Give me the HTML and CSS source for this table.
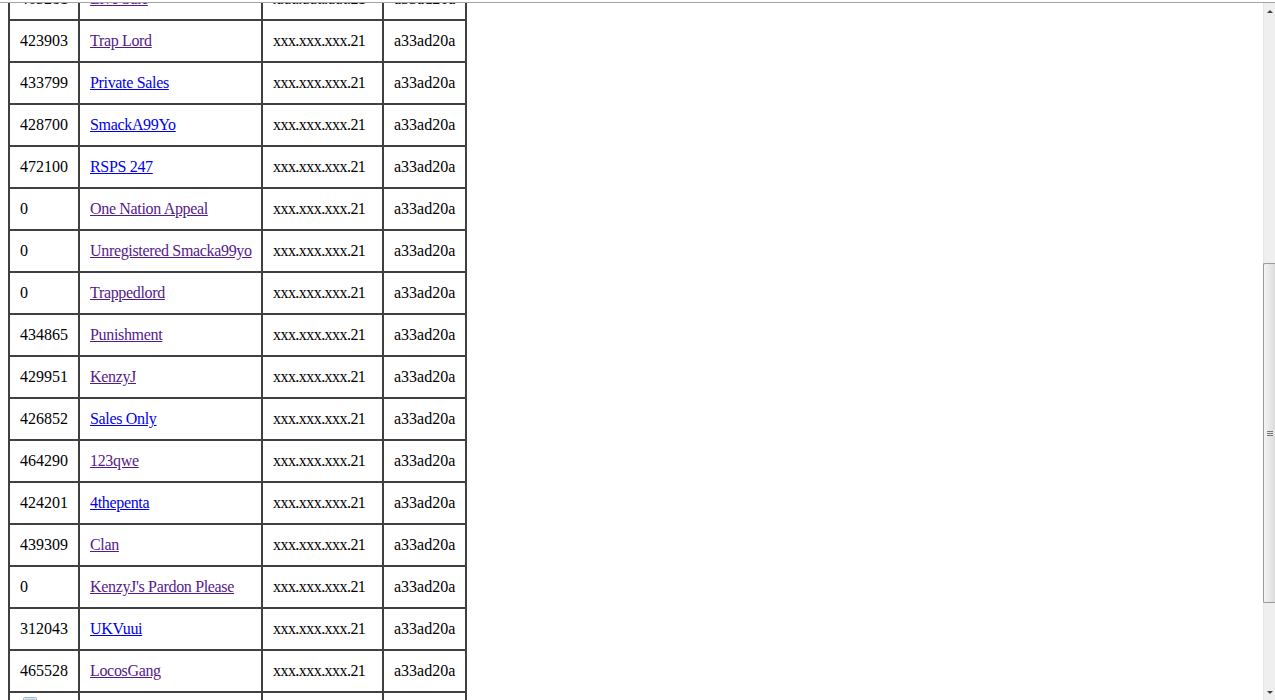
FILE: index.html
```html
<!DOCTYPE html>
<html>
<head>
<meta charset="utf-8">
<title>List</title>
<link rel="stylesheet" href="styles.css">
</head>
<body>
<div class="frame">
  <div class="topline"></div>
  <div class="viewport">
    <div class="page">
      <table class="list">
        <tr><td>465281</td><td><a class="v" href="#">Live Sale</a></td><td>xxx.xxx.xxx.21</td><td>a33ad20a</td></tr>
        <tr><td>423903</td><td><a class="v" href="#">Trap Lord</a></td><td>xxx.xxx.xxx.21</td><td>a33ad20a</td></tr>
        <tr><td>433799</td><td><a class="n" href="#">Private Sales</a></td><td>xxx.xxx.xxx.21</td><td>a33ad20a</td></tr>
        <tr><td>428700</td><td><a class="n" href="#">SmackA99Yo</a></td><td>xxx.xxx.xxx.21</td><td>a33ad20a</td></tr>
        <tr><td>472100</td><td><a class="n" href="#">RSPS 247</a></td><td>xxx.xxx.xxx.21</td><td>a33ad20a</td></tr>
        <tr><td>0</td><td><a class="v" href="#">One Nation Appeal</a></td><td>xxx.xxx.xxx.21</td><td>a33ad20a</td></tr>
        <tr><td>0</td><td><a class="v" href="#">Unregistered Smacka99yo</a></td><td>xxx.xxx.xxx.21</td><td>a33ad20a</td></tr>
        <tr><td>0</td><td><a class="v" href="#">Trappedlord</a></td><td>xxx.xxx.xxx.21</td><td>a33ad20a</td></tr>
        <tr><td>434865</td><td><a class="v" href="#">Punishment</a></td><td>xxx.xxx.xxx.21</td><td>a33ad20a</td></tr>
        <tr><td>429951</td><td><a class="v" href="#">KenzyJ</a></td><td>xxx.xxx.xxx.21</td><td>a33ad20a</td></tr>
        <tr><td>426852</td><td><a class="n" href="#">Sales Only</a></td><td>xxx.xxx.xxx.21</td><td>a33ad20a</td></tr>
        <tr><td>464290</td><td><a class="v" href="#">123qwe</a></td><td>xxx.xxx.xxx.21</td><td>a33ad20a</td></tr>
        <tr><td>424201</td><td><a class="n" href="#">4thepenta</a></td><td>xxx.xxx.xxx.21</td><td>a33ad20a</td></tr>
        <tr><td>439309</td><td><a class="v" href="#">Clan</a></td><td>xxx.xxx.xxx.21</td><td>a33ad20a</td></tr>
        <tr><td>0</td><td><a class="v" href="#">KenzyJ's Pardon Please</a></td><td>xxx.xxx.xxx.21</td><td>a33ad20a</td></tr>
        <tr><td>312043</td><td><a class="n" href="#">UKVuui</a></td><td>xxx.xxx.xxx.21</td><td>a33ad20a</td></tr>
        <tr><td>465528</td><td><a class="v" href="#">LocosGang</a></td><td>xxx.xxx.xxx.21</td><td>a33ad20a</td></tr>
        <tr class="last"><td><svg class="pic" width="14" height="12" viewBox="0 0 14 12"><rect x="0.5" y="0.5" width="13" height="11" rx="1" fill="#dbe6f0" stroke="#9fb6cc"/><rect x="2" y="2" width="10" height="3" fill="#b8cbdd"/></svg></td><td>&nbsp;</td><td>&nbsp;</td><td>&nbsp;</td></tr>
      </table>
    </div>
    <div class="scrollbar">
      <div class="arrow"><span class="tri up"></span></div>
      <div class="gap-top"></div>
      <div class="thumb"><span class="grip"></span><span class="grip"></span><span class="grip"></span></div>
      <div class="gap-bottom"></div>
      <div class="arrow"><span class="tri down"></span></div>
    </div>
  </div>
</div>
</body>
</html>
```

FILE: styles.css
```css
html, body {
  margin: 0;
  padding: 0;
  background: #ffffff;
}

.frame {
  display: flex;
  flex-direction: column;
  height: 700px;
  overflow: hidden;
}

.topline {
  height: 1px;
  margin-top: 2px;
  background: #a3a3a3;
  flex: none;
}

.viewport {
  display: flex;
  flex: 1;
  min-height: 0;
  overflow: hidden;
}

.page {
  flex: 1;
  overflow: hidden;
  padding-left: 8px;
}

.list {
  border-collapse: separate;
  border-spacing: 0;
  border: 1px solid #404040;
  margin-top: -26px;
  font-family: "Liberation Serif", "Times New Roman", serif;
  font-size: 16px;
  color: #000000;
}

.list td {
  border: 1px solid #404040;
  padding: 11px 10px;
  line-height: 18px;
  white-space: nowrap;
  text-align: left;
  vertical-align: middle;
  overflow: hidden;
}

.list td:nth-child(1) {
  width: 48px;
  min-width: 48px;
  max-width: 48px;
}

.list td:nth-child(2) {
  width: 161px;
  min-width: 161px;
  max-width: 161px;
  letter-spacing: -0.33px;
}

.list td:nth-child(3) {
  width: 99px;
  min-width: 99px;
  max-width: 99px;
  letter-spacing: -0.55px;
}

.list td:nth-child(4) {
  width: 61px;
  min-width: 61px;
  max-width: 61px;
}

.list a {
  text-decoration: underline;
}

.list a.v {
  color: #551a8b;
}

.list a.n {
  color: #0000ee;
}

.list tr.last td {
  padding-top: 4px;
  vertical-align: top;
}

.pic {
  display: block;
  margin-left: 3px;
}

.scrollbar {
  width: 11px;
  flex: none;
  display: flex;
  flex-direction: column;
  background: #efefef;
  border-left: 1px solid #e6e6e6;
}

.arrow {
  height: 16px;
  flex: none;
  display: flex;
  align-items: center;
  justify-content: center;
}

.tri {
  width: 0;
  height: 0;
  border-left: 3px solid transparent;
  border-right: 3px solid transparent;
}

.tri.up {
  border-bottom: 3px solid #404040;
}

.tri.down {
  border-top: 3px solid #404040;
}

.gap-top {
  height: 244px;
  flex: none;
}

.gap-bottom {
  flex: 1;
}

.thumb {
  height: 338px;
  flex: none;
  margin-left: -1px;
  border: 1px solid #9a9a9a;
  border-right: none;
  border-radius: 2px 0 0 2px;
  background: linear-gradient(to right, #f4f4f4, #dcdcdc);
  display: flex;
  flex-direction: column;
  align-items: center;
  justify-content: center;
  gap: 1px;
}

.grip {
  display: block;
  width: 6px;
  height: 1px;
  background: #777777;
}
```
